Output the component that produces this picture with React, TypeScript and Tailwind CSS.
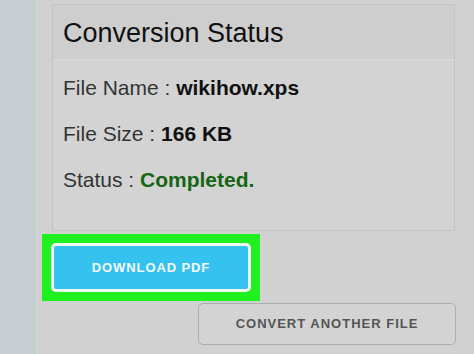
export default function App() {
  return (
    <div className="flex h-[354px] w-[474px] overflow-hidden bg-[#d1d1d1] font-['Liberation_Sans',Arial,sans-serif]">
      {/* left strip */}
      <div className="w-[37px] shrink-0 border-r border-[#d8d8d8] bg-[#c6ced1]" />

      <div className="flex w-[435px] flex-col pt-[4px] pl-[15px]">
        {/* status card */}
        <div className="flex h-[227px] w-[403px] flex-col border border-[#c3c3c3] bg-[#d3d3d3]">
          <div className="h-[55px] border-b border-[#dadada] bg-[#cecece] pl-[10px] pt-[12px] text-[27px] leading-[32px] text-[#111]">
            Conversion Status
          </div>
          <div className="flex flex-col gap-[22px] pl-[10px] pt-[16px] text-[21px] leading-[24px] text-[#333]">
            <div>
              File Name : <span className="font-bold text-[#111]">wikihow.xps</span>
            </div>
            <div>
              File Size : <span className="font-bold text-[#111]">166 KB</span>
            </div>
            <div>
              Status : <span className="font-bold text-[#156515]">Completed.</span>
            </div>
          </div>
        </div>

        {/* highlighted download button */}
        <div className="-ml-[10px] mt-[3px] w-[218px] bg-[#1ff01f] p-[9px]">
          <button className="flex h-[49px] w-[200px] items-center justify-center rounded-[5px] border-[3px] border-[#f2f8f2] bg-[#36c2ef] text-[13px] font-bold tracking-[0.9px] text-[#f4f9fc]">
            DOWNLOAD PDF
          </button>
        </div>

        <div className="flex w-[404px] justify-end pt-[2px]">
          <button className="flex h-[42px] w-[258px] items-center justify-center rounded-[5px] border border-[#adadad] bg-[#d3d3d3] text-[13px] font-bold tracking-[1px] text-[#555]">
            CONVERT ANOTHER FILE
          </button>
        </div>
      </div>
    </div>
  );
}
